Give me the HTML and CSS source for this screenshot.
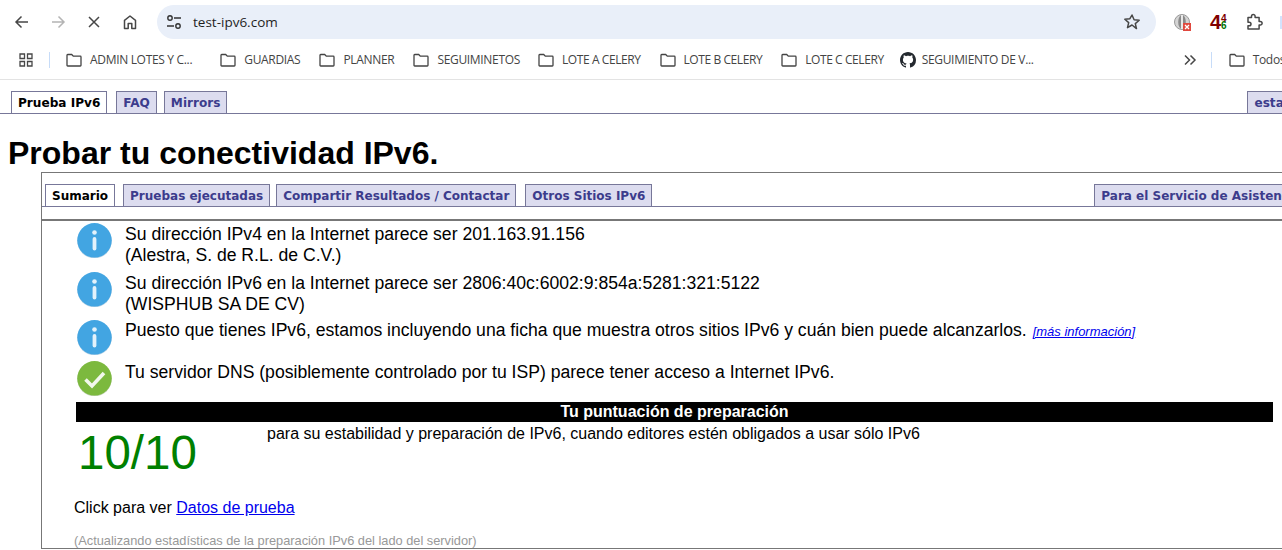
FILE: index.html
```
<!DOCTYPE html>
<html lang="es">
<head>
<meta charset="utf-8">
<title>test-ipv6.com</title>
<link rel="stylesheet" href="styles.css">
</head>
<body>
<svg class="defs" width="0" height="0" aria-hidden="true">
  <symbol id="folder" viewBox="0 0 16 16"><path d="M1 3.2c0-.4.3-.7.7-.7h4l1.600 1.700h7c.4 0 .7.3.7.7v8.400c0 .4-.3.7-.7.7H1.700c-.4 0-.7-.3-.7-.7z" fill="none" stroke="#444" stroke-width="1.300"/></symbol>
  <symbol id="info" viewBox="0 0 35 35"><circle cx="17.500" cy="18" r="17.300" fill="#2f7fb5" opacity=".35"/><circle cx="17.500" cy="17.300" r="17.200" fill="#42a5e2"/><circle cx="17.500" cy="9.500" r="2.300" fill="#fff" opacity=".85"/><rect x="15.600" y="14" width="3.800" height="13.500" rx="1.900" fill="#fff" opacity=".85"/></symbol>
</svg>

<header class="chrome">
  <div class="toolbar">
    <div class="navs">
      <svg class="ic" viewBox="0 0 20 20"><path d="M16 10H4.500M9.500 4.500 4 10l5.500 5.500" fill="none" stroke="#474747" stroke-width="1.500"/></svg>
      <svg class="ic" viewBox="0 0 20 20"><path d="M4 10h11.500M10.500 4.500 16 10l-5.500 5.500" fill="none" stroke="#b4b4b4" stroke-width="1.500"/></svg>
      <svg class="ic" viewBox="0 0 20 20"><path d="m5 5 10 10M15 5 5 15" fill="none" stroke="#474747" stroke-width="1.500"/></svg>
      <svg class="ic" viewBox="0 0 20 20"><path d="M4.500 16.500V8.300L10 4l5.500 4.300v8.200h-3.700v-5H8.200v5z" fill="none" stroke="#474747" stroke-width="1.500" stroke-linejoin="round"/></svg>
    </div>
    <div class="omnibox">
      <svg class="tune" viewBox="0 0 18 18"><circle cx="5" cy="5" r="2.200" fill="none" stroke="#333" stroke-width="1.400"/><path d="M9 5h7M2 13h7" stroke="#333" stroke-width="1.400"/><circle cx="13" cy="13" r="2.200" fill="none" stroke="#333" stroke-width="1.400"/></svg>
      <span class="url">test-ipv6.com</span>
      <svg class="star" viewBox="0 0 20 20"><path d="m10 3 2.100 4.700 5.100.5-3.900 3.400 1.200 5L10 13l-4.500 2.600 1.200-5-3.900-3.400 5.100-.5z" fill="none" stroke="#474747" stroke-width="1.500" stroke-linejoin="round"/></svg>
    </div>
    <div class="exts">
      <svg class="ext-globe" viewBox="0 0 17 17"><circle cx="8" cy="8" r="7.500" fill="#d4d4d4" stroke="#999"/><ellipse cx="8" cy="8" rx="3.800" ry="7" fill="#8a8a8a"/><rect x="7" y="1" width="2" height="14" fill="#e8e8e8"/><rect x="9" y="9" width="8" height="8" fill="#e0483e"/><path d="m11 11 4 4m0-4-4 4" stroke="#fff" stroke-width="1.300"/></svg>
      <div class="ext-46"><span class="big4">4</span><span class="stack"><span class="s4">4</span><span class="s6">6</span></span></div>
      <svg class="ext-puzzle" viewBox="0 0 20 20"><path d="M3 5.500h3.500V4.200a1.800 1.800 0 0 1 3.600 0v1.300h4v4h1.200a1.800 1.800 0 0 1 0 3.600h-1.200v4H3v-3.300h1.200a1.800 1.800 0 0 0 0-3.600H3z" fill="none" stroke="#474747" stroke-width="1.500" stroke-linejoin="round"/></svg>
      <span class="stub"></span>
    </div>
  </div>
  <nav class="bookmarks">
    <svg class="apps" viewBox="0 0 16 16"><path d="M2 2h4.500v4.500H2zM9.500 2H14v4.500H9.500zM2 9.500h4.500V14H2zM9.500 9.500H14V14H9.500z" fill="none" stroke="#474747" stroke-width="1.300"/></svg>
    <span class="sep"></span>
    <a class="bm bm-wide"><svg><use href="#folder"/></svg>ADMIN LOTES Y C...</a>
    <a class="bm"><svg><use href="#folder"/></svg>GUARDIAS</a>
    <a class="bm"><svg><use href="#folder"/></svg>PLANNER</a>
    <a class="bm bm-short"><svg><use href="#folder"/></svg>SEGUIMINETOS</a>
    <a class="bm bm-tight"><svg><use href="#folder"/></svg>LOTE A CELERY</a>
    <a class="bm bm-tight"><svg><use href="#folder"/></svg>LOTE B CELERY</a>
    <a class="bm bm-tight"><svg><use href="#folder"/></svg>LOTE C CELERY</a>
    <a class="bm bm-gh"><svg viewBox="0 0 16 16"><path fill="#24292f" d="M8 0C3.580 0 0 3.580 0 8c0 3.540 2.290 6.530 5.470 7.590.4.070.55-.17.55-.38 0-.19-.01-.82-.01-1.490-2.010.37-2.530-.49-2.690-.94-.09-.23-.48-.94-.82-1.130-.28-.15-.68-.52-.01-.53.630-.01 1.080.58 1.230.82.720 1.210 1.870.87 2.330.66.070-.52.280-.87.510-1.070-1.780-.2-3.640-.89-3.640-3.950 0-.87.310-1.590.820-2.150-.08-.2-.36-1.020.08-2.120 0 0 .67-.21 2.200.82.640-.18 1.320-.27 2-.27s1.360.09 2 .27c1.530-1.040 2.200-.82 2.200-.82.440 1.100.160 1.920.080 2.120.51.560.82 1.270.82 2.150 0 3.070-1.870 3.750-3.650 3.950.290.25.540.73.540 1.480 0 1.070-.01 1.930-.01 2.200 0 .21.150.46.550.38A8.010 8.010 0 0 0 16 8c0-4.420-3.580-8-8-8z"/></svg>SEGUIMIENTO DE V...</a>
    <svg class="more" viewBox="0 0 16 16"><path d="m3 3.500 4.500 4.500L3 12.500M8.500 3.500 13 8l-4.500 4.500" fill="none" stroke="#474747" stroke-width="1.500"/></svg>
    <span class="sep sep-r"></span>
    <a class="bm"><svg><use href="#folder"/></svg>Todos</a>
  </nav>
</header>

<main class="page">
  <div class="tabs tabs-top">
    <a class="tab active">Prueba IPv6</a>
    <a class="tab">FAQ</a>
    <a class="tab">Mirrors</a>
    <a class="tab tab-far-top">esta</a>
  </div>
  <h1>Probar tu conectividad IPv6.</h1>
  <section class="box">
    <div class="tabs tabs-inner">
      <a class="tab active">Sumario</a>
      <a class="tab">Pruebas ejecutadas</a>
      <a class="tab tab-share">Compartir Resultados / Contactar</a>
      <a class="tab tab-others">Otros Sitios IPv6</a>
      <a class="tab tab-far-inner">Para el Servicio de Asistenc</a>
    </div>
    <div class="content">
      <div class="row r1"><svg class="icon"><use href="#info"/></svg><p>Su dirección IPv4 en la Internet parece ser 201.163.91.156<br>(Alestra, S. de R.L. de C.V.)</p></div>
      <div class="row r2"><svg class="icon"><use href="#info"/></svg><p>Su dirección IPv6 en la Internet parece ser 2806:40c:6002:9:854a:5281:321:5122<br>(WISPHUB SA DE CV)</p></div>
      <div class="row r3"><svg class="icon"><use href="#info"/></svg><p>Puesto que tienes IPv6, estamos incluyendo una ficha que muestra otros sitios IPv6 y cuán bien puede alcanzarlos. <a class="more-info" href="#">[más información]</a></p></div>
      <div class="row r4"><svg class="icon" viewBox="0 0 35 35"><circle cx="17.500" cy="18" r="17.300" fill="#4e7f28" opacity=".35"/><circle cx="17.500" cy="17.300" r="17.200" fill="#7cb93e"/><path d="m8.500 18.500 6.500 6.500L27 12" fill="none" stroke="#fff" stroke-width="3.600" opacity=".9"/></svg><p>Tu servidor DNS (posiblemente controlado por tu ISP) parece tener acceso a Internet IPv6.</p></div>
      <div class="score-head">Tu puntuación de preparación</div>
      <div class="score">
        <div class="score-num">10/10</div>
        <div class="score-text">para su estabilidad y preparación de IPv6, cuando editores estén obligados a usar sólo IPv6</div>
      </div>
      <p class="click">Click para ver <a href="#">Datos de prueba</a></p>
      <p class="updating">(Actualizando estadísticas de la preparación IPv6 del lado del servidor)</p>
    </div>
  </section>
</main>
</body>
</html>
```

FILE: styles.css
```
* { box-sizing: border-box; }
html, body { margin: 0; height: 550px; overflow: hidden; background: #fff; }
body { font-family: "Liberation Sans", Arial, sans-serif; color: #000; width: 1282px; }
.defs { position: absolute; }

.chrome { height: 80px; border-bottom: 1px solid #e3e3e3; font-family: "Open Sans", sans-serif; }
.toolbar { height: 44px; display: flex; align-items: center; padding-left: 12px; }
.navs { display: flex; gap: 16px; width: 145px; }
.ic { width: 20px; height: 20px; }
.omnibox { width: 999px; height: 34px; background: #e9eff9; border-radius: 17px; display: flex; align-items: center; padding: 0 14px 0 8px; }
.tune { width: 18px; height: 18px; margin-right: 10px; }
.url { flex: 1; font-size: 13.500px; color: #1f1f1f; }
.star { width: 20px; height: 20px; }
.exts { display: flex; align-items: center; flex: 1; position: relative; height: 34px; padding-left: 18px; }
.ext-globe { width: 17px; height: 17px; margin-right: 19px; }
.ext-46 { display: flex; font-family: "Liberation Sans", sans-serif; font-weight: 700; width: 26px; margin-right: 11px; align-items: center; }
.big4 { font-size: 20px; color: #800000; line-height: 20px; width: 11px; }
.stack { display: flex; flex-direction: column; font-size: 10px; line-height: 7px; }
.s4 { color: #800000; }
.s6 { color: #007000; }
.ext-puzzle { width: 20px; height: 20px; margin-left: -2px; }
.stub { position: absolute; right: 0; top: 11px; width: 2px; height: 13px; background: #d3e3fd; }

.bookmarks { height: 31px; display: flex; align-items: center; padding-left: 18px; font-size: 12px; color: #444; overflow: hidden; }
.apps { width: 16px; height: 16px; flex: none; }
.sep { width: 1px; height: 16px; background: #c7dcf8; margin: 0 16px 0 15px; flex: none; }
.bm { display: flex; align-items: center; gap: 8px; margin-right: 19px; white-space: nowrap; letter-spacing: -.32px; flex: none; }
.bm svg { width: 16px; height: 16px; flex: none; }
.bm-wide { margin-right: 28px; }
.bm-short { margin-right: 18px; }
.bm-tight { letter-spacing: -.42px; }
.bm-gh { gap: 6px; margin: 0 0 0 -3px; width: 282px; }
.more { width: 16px; height: 16px; flex: none; }
.sep-r { margin: 0 17px 0 13px; }

.page { height: 470px; overflow: hidden; }
.tabs { display: flex; align-items: flex-end; gap: 7px; height: 34px; padding-left: 11px; border-bottom: 1px solid #777799; white-space: nowrap; font-family: "DejaVu Sans", Verdana, sans-serif; overflow: hidden; }
.tab { display: block; height: 22px; line-height: 22px; padding: 0 6px; background: #dcdcef; border: 1px solid #777799; border-bottom: 0; color: #3c3c8c; font-size: 12.100px; font-weight: 700; flex: none; }
.tab.active { background: #fff; color: #000; height: 23px; margin-bottom: -1px; }
.tabs-top .tab.active { margin-right: 2px; }
.tab-far-top { margin-left: 1013px; }
h1 { font-size: 32px; line-height: 37px; margin: 21px 0 0 8px; font-weight: 700; }
.box { margin: 0 0 0 41px; height: 377px; border: 1px solid #777; border-right: 0; overflow: hidden; }
.tabs-inner { height: 34px; padding-left: 3px; }
.tabs-inner .tab { font-size: 12px; }
.tabs-inner .tab.active { margin-right: 1px; }
.tab-share { margin-left: -1px; }
.tab-others { margin-left: 2px; }
.tab-far-inner { margin-left: 435px; }
.content { margin-top: 12px; border-top: 2px solid #777; padding: 2px 9px 0 34px; height: 330px; }
.row { display: flex; gap: 13px; font-size: 17.600px; line-height: 21px; }
.row p { margin: 1px 0 0; }
.row.r3 p { margin-top: 0; }
.icon { width: 35px; height: 35px; flex: none; margin-left: 1px; }
.r1 { height: 49px; }
.r2 { height: 48px; }
.r3 { height: 41px; }
.r4 { height: 41px; }
.more-info { font-size: 13px; font-style: italic; color: #0000ee; margin-left: 1px; }
.score-head { height: 20px; background: #000; color: #fff; font-weight: 700; font-size: 16px; line-height: 20px; text-align: center; }
.score { display: flex; height: 62px; }
.score-num { color: #008000; font-size: 47.500px; line-height: 62px; width: 191px; padding-left: 2px; }
.score-text { font-size: 16px; line-height: 24px; }
.click { margin: 13px 0 0 -2px; font-size: 16px; line-height: 22px; }
.click a { color: #0000ee; }
.updating { margin: 14px 0 0 -2px; font-size: 12.800px; line-height: 16px; color: #999; }
```
